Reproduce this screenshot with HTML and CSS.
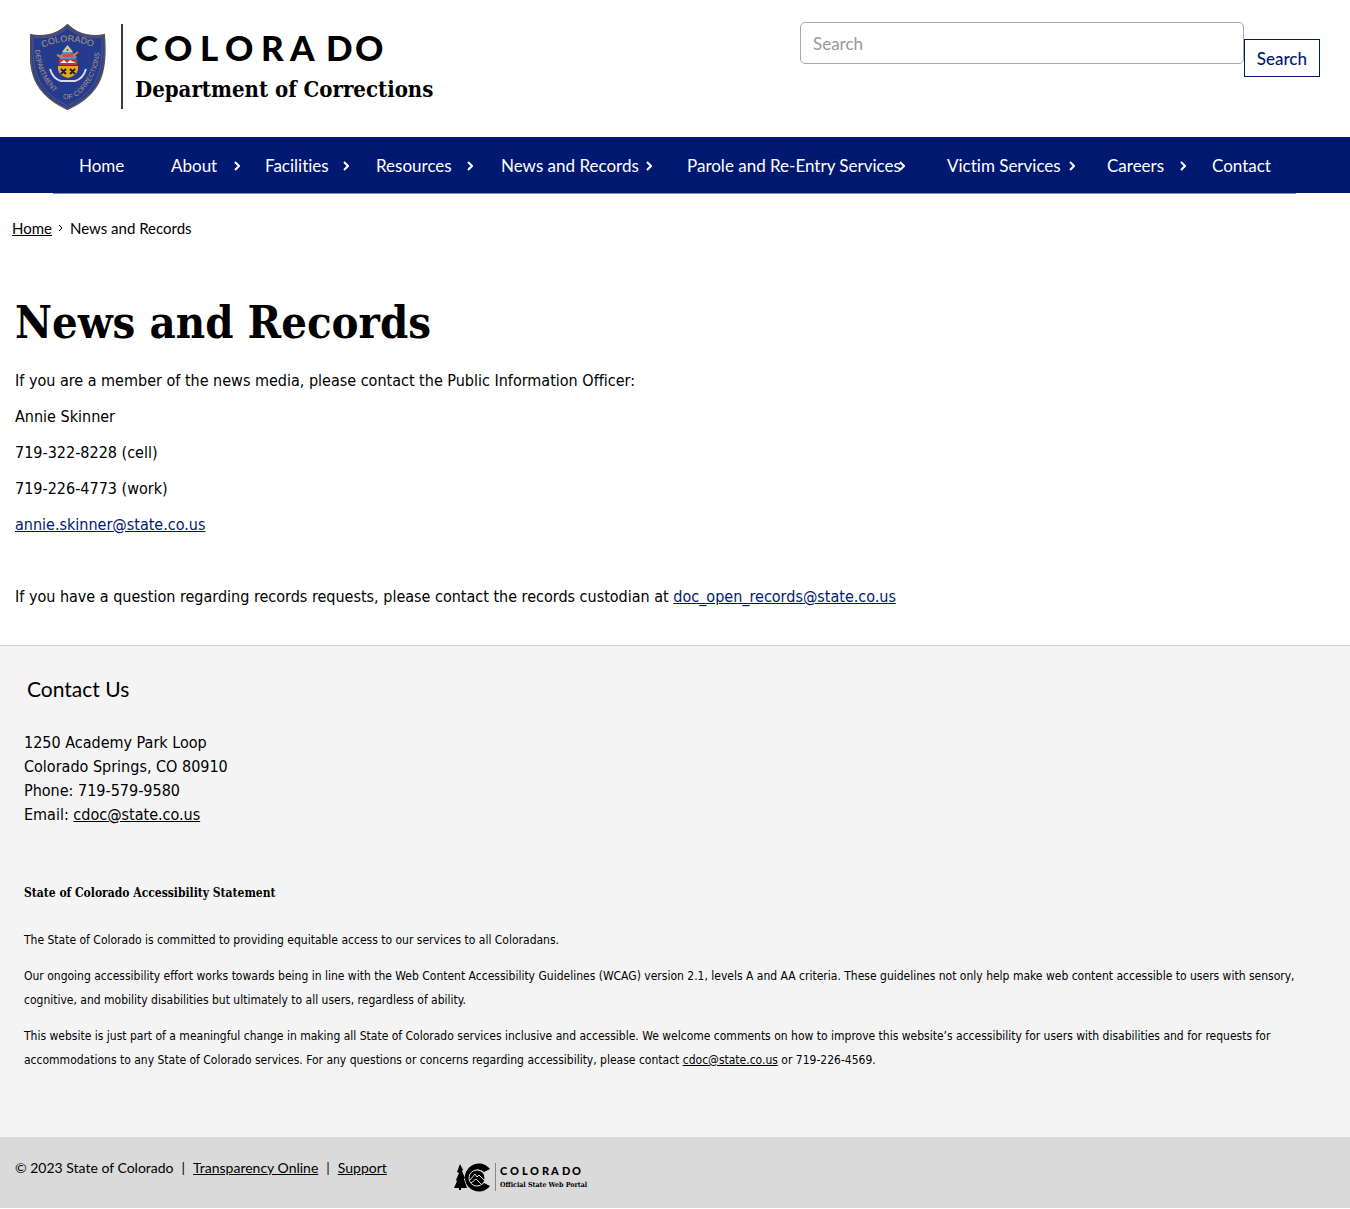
FILE: index.html
```html
<!DOCTYPE html>
<html lang="en">
<head>
<meta charset="utf-8">
<meta name="viewport" content="width=device-width, initial-scale=1">
<title>News and Records | Department of Corrections</title>
<link rel="stylesheet" href="styles.css">
</head>
<body>
<header class="site-header">
  <a class="brand" href="#" aria-label="Colorado Department of Corrections">
    <svg width="410" height="88" viewBox="0 0 410 88">
      <defs>
        <path id="arc-top" d="M13 24Q37 11 65 24"/>
        <path id="arc-left" d="M5 26Q7 56 30 73"/>
        <path id="arc-right" d="M46 73Q68 56 70 25"/>
      </defs>
      <path d="M37.500 1Q46 9 56 11Q66 13 74 11Q76 34 72 49Q66 72 37.500 85Q9 72 3 49Q-1 34 1 11Q9 13 19 11Q29 9 37.500 1Z" fill="#253b8e" stroke="#55505f" stroke-width="2"/>
      <path d="M37.500 4Q46 11 57 13Q65 15 72 13Q73 35 69 49Q63 70 37.500 82Q12 70 6 49Q2 35 3 13Q10 15 18 13Q29 11 37.500 4Z" fill="none" stroke="#54598a" stroke-width="1"/>
      <g class="seal-text">
        <text class="seal-state"><textPath href="#arc-top">COLORADO</textPath></text>
        <text><textPath href="#arc-left">DEPARTMENT</textPath></text>
        <text x="33" y="75">OF</text>
        <text><textPath href="#arc-right">CORRECTIONS</textPath></text>
      </g>
      <path d="M32 28L37.500 21L43 28Z" fill="#d5c8a0"/>
      <circle cx="37.500" cy="26" r="1" fill="#27458d"/>
      <path d="M29 33L33 28H42L47 33L45 36H31Z" fill="#4b95c8"/>
      <path d="M27 31L32 33M43 32L48 28" stroke="#e07a3e" stroke-width="2"/>
      <path d="M33 30H43V33H33Z" fill="#cf4a48"/>
      <path d="M29 35H47V41H29Z" fill="#d22c38"/>
      <path d="M30 39L34 36L37 39L40 36L46 39Z" fill="#fff"/>
      <path d="M28 42H48V46Q46 52 38 54Q30 52 28 46Z" fill="#e6a91e"/>
      <path d="M31 45L36 50M36 45L31 50M40 45L45 50M45 45L40 50" stroke="#24201d" stroke-width="2"/>
      <path d="M20 45Q23 55 31 57H45Q53 55 56 45" fill="none" stroke="#d9dce6" stroke-width="2"/>
      <path d="M91 0H93V85H91Z" fill="#3c3c3c"/>
      <text class="wordmark" x="105 134 170 195 231 260 296 325" y="37">COLORADO</text>
      <text class="agency" x="105" y="73">Department of Corrections</text>
    </svg>
  </a>
  <form class="search" role="search">
    <input class="search-input" type="search" placeholder="Search" aria-label="Search">
    <button class="search-button" type="button">Search</button>
  </form>
</header>

<nav class="main-nav" aria-label="Main">
  <ul class="nav-list">
    <li><a href="#">Home</a></li>
    <li><a href="#">About</a><svg class="chevron" viewBox="0 0 6 10"><path d="M1 1L5 5L1 9"/></svg></li>
    <li><a href="#">Facilities</a><svg class="chevron" viewBox="0 0 6 10"><path d="M1 1L5 5L1 9"/></svg></li>
    <li><a href="#">Resources</a><svg class="chevron" viewBox="0 0 6 10"><path d="M1 1L5 5L1 9"/></svg></li>
    <li><a href="#">News and Records</a><svg class="chevron" viewBox="0 0 6 10"><path d="M1 1L5 5L1 9"/></svg></li>
    <li><a href="#">Parole and Re-Entry Services</a><svg class="chevron" viewBox="0 0 6 10"><path d="M1 1L5 5L1 9"/></svg></li>
    <li><a href="#">Victim Services</a><svg class="chevron" viewBox="0 0 6 10"><path d="M1 1L5 5L1 9"/></svg></li>
    <li><a href="#">Careers</a><svg class="chevron" viewBox="0 0 6 10"><path d="M1 1L5 5L1 9"/></svg></li>
    <li><a href="#">Contact</a></li>
  </ul>
</nav>
<div class="nav-rule"></div>

<nav class="breadcrumb" aria-label="Breadcrumb">
  <a href="#">Home</a><svg class="chevron" viewBox="0 0 6 10"><path d="M1 2L4 5L1 8"/></svg><span>News and Records</span>
</nav>

<main class="content">
  <h1>News and Records</h1>
  <p>If you are a member of the news media, please contact the Public Information Officer:</p>
  <p>Annie Skinner</p>
  <p>719-322-8228 (cell)</p>
  <p>719-226-4773 (work)</p>
  <p><a href="#">annie.skinner@state.co.us</a></p>
  <p class="records">If you have a question regarding records requests, please contact the records custodian at <a href="#">doc_open_records@state.co.us</a></p>
</main>

<footer>
  <div class="footer-main">
    <h2>Contact Us</h2>
    <address>
      1250 Academy Park Loop<br>
      Colorado Springs, CO 80910<br>
      Phone: 719-579-9580<br>
      Email: <a href="#">cdoc@state.co.us</a>
    </address>
    <section class="statement">
      <h3>State of Colorado Accessibility Statement</h3>
      <p>The State of Colorado is committed to providing equitable access to our services to all Coloradans.</p>
      <p>Our ongoing accessibility effort works towards being in line with the Web Content Accessibility Guidelines (WCAG) version 2.1, levels A and AA criteria. These guidelines not only help make web content accessible to users with sensory, cognitive, and mobility disabilities but ultimately to all users, regardless of ability.</p>
      <p>This website is just part of a meaningful change in making all State of Colorado services inclusive and accessible. We welcome comments on how to improve this website’s accessibility for users with disabilities and for requests for accommodations to any State of Colorado services. For any questions or concerns regarding accessibility, please contact <a href="#">cdoc@state.co.us</a> or 719-226-4569.</p>
    </section>
  </div>
  <div class="footer-bar">
    <div class="legal"><span>© 2023 State of Colorado</span><span>|</span><a href="#">Transparency Online</a><span>|</span><a href="#">Support</a></div>
    <a class="portal" href="#" aria-label="Colorado Official State Web Portal">
      <svg width="140" height="30" viewBox="0 0 140 30">
        <path d="M6 1L9 7L8 8L11 15L10 16L13 25H7V27H5V25H0L3 18L2 17L5 10L3 9Z" fill="#000"/>
        <path d="M36 6A14 14 0 1 0 36 23L30 20A8 8 0 1 1 30 9Z" fill="#000"/>
        <circle cx="23" cy="15" r="8" fill="#000" stroke="#dadada"/>
        <path d="M16 17L21 11L23 14L25 12L30 17M17 20L22 16L27 21" fill="none" stroke="#dadada"/>
        <path d="M41 0H42V28H41Z" fill="#888"/>
        <text class="portal-mark" x="46 56 68 76 88 97 108 118" y="12">COLORADO</text>
        <text class="portal-name" x="46" y="24">Official State Web Portal</text>
      </svg>
    </a>
  </div>
</footer>
</body>
</html>
```
FILE: styles.css
```css
* {
  box-sizing: border-box;
}

body {
  margin: 0;
  background: #fff;
  color: #000;
  font: 16px/24px "DejaVu Sans Condensed", "Open Sans", sans-serif;
  font-variant-ligatures: none;
}

a {
  color: inherit;
}

/* Header */
.site-header {
  display: flex;
  justify-content: space-between;
  align-items: flex-start;
  min-height: 137px;
  padding: 22px 30px 24px;
}

.brand {
  display: block;
  padding-top: 2px;
}

.brand svg,
.portal svg {
  display: block;
}

.wordmark {
  font: 900 35px Lato, sans-serif;
}

.agency {
  font: bold 22px "DejaVu Serif Condensed", "DejaVu Serif", serif;
}

.seal-text {
  fill: #b3977f;
  font: 7px "Liberation Sans", sans-serif;
}

.seal-state {
  font-size: 9px;
}

.search {
  display: flex;
  width: 520px;
}

.search-input {
  flex: 1;
  min-width: 0;
  height: 42px;
  padding: 0 12px;
  border: 1px solid #aaa;
  border-radius: 5px;
  background: #fff;
  color: #000;
  font: 17px Lato, sans-serif;
}

.search-input::placeholder {
  color: #999;
}

.search-button {
  height: 38px;
  margin-top: 17px;
  padding: 0 12px;
  border: 1px solid #001970;
  background: #fff;
  color: #001970;
  font: 500 17px Lato, sans-serif;
}

/* Main navigation */
.main-nav {
  padding: 0 54px 0 79px;
  background: #001970;
}

.nav-list {
  display: grid;
  grid-template-columns: 92fr 94fr 111fr 125fr 186fr 260fr 160fr 105fr 84fr;
  margin: 0;
  padding: 0;
  list-style: none;
}

.nav-list li {
  display: flex;
  justify-content: space-between;
  align-items: center;
  min-width: 0;
  height: 56px;
  padding-top: 2px;
  padding-right: calc(16px + 10%);
  color: #fff;
  font-family: Lato, sans-serif;
  font-size: 17px;
  white-space: nowrap;
}

.nav-list a {
  min-width: 0;
  text-decoration: none;
}

.chevron {
  flex: none;
  width: 6px;
  height: 10px;
  fill: none;
  stroke: currentColor;
  stroke-width: 2;
}

.nav-rule {
  height: 1px;
  margin: 0 54px 0 53px;
  background: #7f8cb7;
}

.breadcrumb {
  display: flex;
  align-items: center;
  gap: 6px;
  padding: 22px 12px 0;
  font-family: Lato, sans-serif;
  font-size: 15px;
}

.breadcrumb .chevron {
  stroke-width: 1;
}

/* Page content */
.content {
  padding: 51px 15px 36px;
}

.content h1 {
  margin: 0 0 14px;
  font-family: "DejaVu Serif Condensed", "DejaVu Serif", serif;
  font-size: 45px;
  line-height: 64px;
}

.content p {
  margin: 0 0 12px;
}

.content p a {
  color: #001970;
}

.content .records {
  margin: 48px 0 0;
}

/* Footer */
.footer-main {
  padding: 31px 24px 65px;
  border-top: 1px solid #ccc;
  background: #f4f4f4;
}

.footer-main h2 {
  margin: 0 3px 30px;
  font-family: Lato, sans-serif;
  font-size: 21px;
  font-weight: normal;
}

.footer-main address {
  margin-bottom: 54px;
  font-style: normal;
}

.statement {
  font-size: 12px;
}

.statement h3 {
  margin: 0 0 23px;
  font-family: "DejaVu Serif Condensed", "DejaVu Serif", serif;
  font-size: 12px;
}

.statement p {
  margin: 0 0 12px;
}

.statement p:last-child {
  margin: 0;
}

.footer-bar {
  display: flex;
  gap: 67px;
  padding: 19px 15px 15px;
  background: #dadada;
}

.legal {
  display: flex;
  gap: 8px;
  font-family: Lato, sans-serif;
  font-size: 14px;
}

.portal {
  padding-top: 7px;
}

.portal-mark {
  font: 900 11px Lato, sans-serif;
}

.portal-name {
  font: bold 7px "DejaVu Serif Condensed", "DejaVu Serif", serif;
}
```
